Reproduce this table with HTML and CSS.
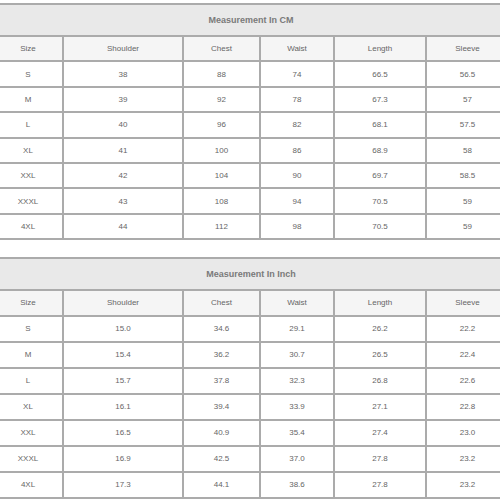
FILE: index.html
```html
<!DOCTYPE html>
<html>
<head>
<meta charset="utf-8">
<link rel="stylesheet" href="styles.css">
</head>
<body>
<div class="page">
  <table class="size-table">
    <colgroup>
      <col class="c-size"><col class="c-shoulder"><col class="c-chest"><col class="c-waist"><col class="c-length"><col class="c-sleeve">
    </colgroup>
    <tr class="title-row"><th colspan="6">Measurement In CM</th></tr>
    <tr class="head-row"><td>Size</td><td>Shoulder</td><td>Chest</td><td>Waist</td><td>Length</td><td>Sleeve</td></tr>
    <tr><td>S</td><td>38</td><td>88</td><td>74</td><td>66.5</td><td>56.5</td></tr>
    <tr><td>M</td><td>39</td><td>92</td><td>78</td><td>67.3</td><td>57</td></tr>
    <tr><td>L</td><td>40</td><td>96</td><td>82</td><td>68.1</td><td>57.5</td></tr>
    <tr><td>XL</td><td>41</td><td>100</td><td>86</td><td>68.9</td><td>58</td></tr>
    <tr><td>XXL</td><td>42</td><td>104</td><td>90</td><td>69.7</td><td>58.5</td></tr>
    <tr><td>XXXL</td><td>43</td><td>108</td><td>94</td><td>70.5</td><td>59</td></tr>
    <tr><td>4XL</td><td>44</td><td>112</td><td>98</td><td>70.5</td><td>59</td></tr>
  </table>
  <table class="size-table inch">
    <colgroup>
      <col class="c-size"><col class="c-shoulder"><col class="c-chest"><col class="c-waist"><col class="c-length"><col class="c-sleeve">
    </colgroup>
    <tr class="title-row"><th colspan="6">Measurement In Inch</th></tr>
    <tr class="head-row"><td>Size</td><td>Shoulder</td><td>Chest</td><td>Waist</td><td>Length</td><td>Sleeve</td></tr>
    <tr><td>S</td><td>15.0</td><td>34.6</td><td>29.1</td><td>26.2</td><td>22.2</td></tr>
    <tr><td>M</td><td>15.4</td><td>36.2</td><td>30.7</td><td>26.5</td><td>22.4</td></tr>
    <tr><td>L</td><td>15.7</td><td>37.8</td><td>32.3</td><td>26.8</td><td>22.6</td></tr>
    <tr><td>XL</td><td>16.1</td><td>39.4</td><td>33.9</td><td>27.1</td><td>22.8</td></tr>
    <tr><td>XXL</td><td>16.5</td><td>40.9</td><td>35.4</td><td>27.4</td><td>23.0</td></tr>
    <tr><td>XXXL</td><td>16.9</td><td>42.5</td><td>37.0</td><td>27.8</td><td>23.2</td></tr>
    <tr><td>4XL</td><td>17.3</td><td>44.1</td><td>38.6</td><td>27.8</td><td>23.2</td></tr>
  </table>
</div>
</body>
</html>
```
FILE: styles.css
```css
html, body {
  margin: 0;
  padding: 0;
  background: #ffffff;
}
.page {
  padding-top: 3px;
  display: flex;
  flex-direction: column;
  gap: 17px;
  overflow: hidden;
  width: 500px;
}
.size-table {
  margin-left: -8px;
  width: 516px;
  table-layout: fixed;
  border-collapse: collapse;
  font-family: "Liberation Sans", Arial, sans-serif;
}
.c-size { width: 70px; }
.c-shoulder { width: 120px; }
.c-chest { width: 77px; }
.c-waist { width: 74px; }
.c-length { width: 92px; }
.c-sleeve { width: 83px; }
.size-table th,
.size-table td {
  border: 2px solid #ababab;
  padding: 0;
  text-align: center;
  vertical-align: middle;
}
.title-row th {
  height: 30px;
  background: #e9e9e9;
  color: #7a7a7a;
  font-size: 9px;
  font-weight: bold;
}
.head-row td {
  height: 23px;
  background: #f5f5f5;
  color: #777777;
  font-size: 8px;
}
.size-table td {
  height: 23.4px;
  color: #666666;
  font-size: 8px;
}
.inch td {
  height: 24px;
}
.inch .head-row td {
  height: 23.5px;
}
```
